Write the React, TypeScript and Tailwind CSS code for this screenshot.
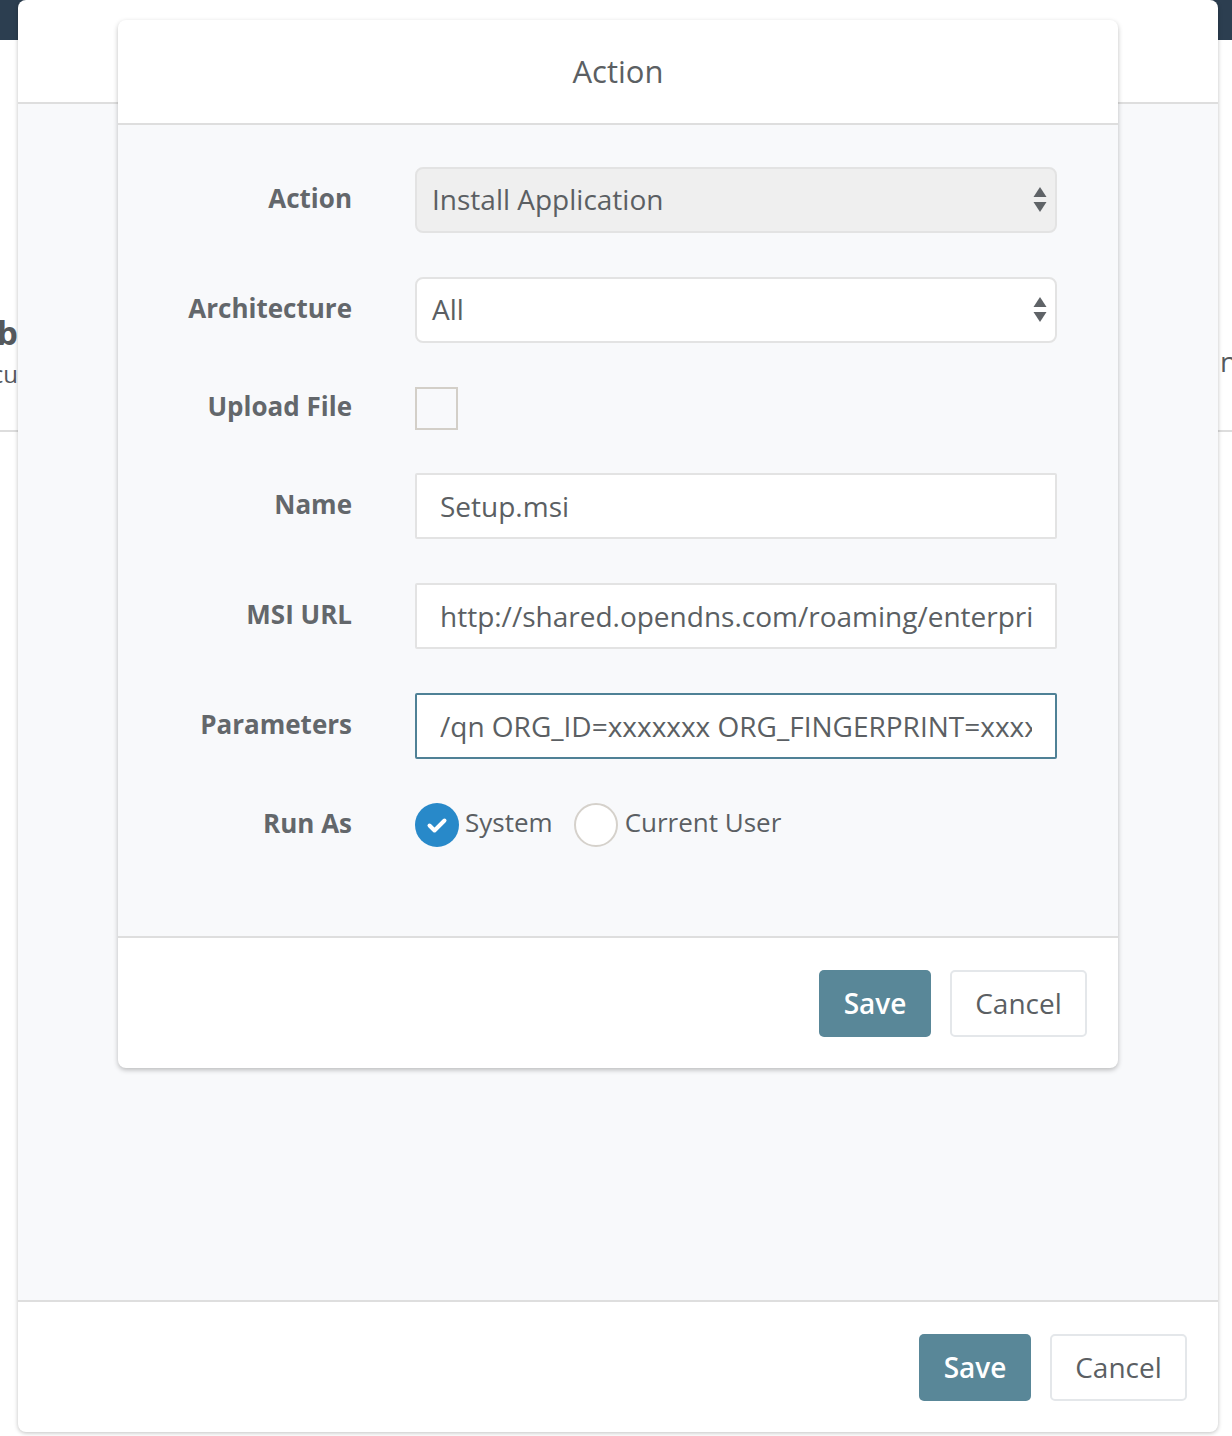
import React from "react"

const font = { fontFamily: '"Open Sans", "Noto Sans", sans-serif' }

function SelectArrows() {
  return (
    <svg width="14" height="26" viewBox="0 0 14 26" className="shrink-0">
      <path d="M7 0 L13.5 10 L0.5 10 Z" fill="#5f6367" />
      <path d="M0.5 15 L13.5 15 L7 25 Z" fill="#5f6367" />
    </svg>
  )
}

function Select({ value, disabled }: { value: string; disabled?: boolean }) {
  return (
    <div
      className={
        "flex h-[66px] w-full items-center justify-between rounded-lg border-2 border-[#e3e3e3] pl-[15px] pr-[8px] text-[28px] text-[#5b5f63] " +
        (disabled ? "bg-[#efefef]" : "bg-white")
      }
    >
      <span className="pb-[2px]">{value}</span>
      <SelectArrows />
    </div>
  )
}

function TextInput({ value, focused }: { value: string; focused?: boolean }) {
  return (
    <div
      className={
        "flex h-[66px] w-full min-w-0 items-center rounded-[2px] bg-white pl-[23px] pr-[23px] text-[28px] text-[#5b5f63] " +
        (focused ? "border-2 border-[#4f8196]" : "border-2 border-[#e3e3e3]")
      }
    >
      <div className="min-w-0 flex-1 overflow-hidden whitespace-nowrap">{value}</div>
    </div>
  )
}

function Row({ label, children, h = "h-[66px]" }: { label: string; children: React.ReactNode; h?: string }) {
  return (
    <div className={"flex items-center " + h}>
      <div className="w-[234px] shrink-0 pb-[4px] text-right text-[26px] font-bold text-[#63676b]">{label}</div>
      <div className="ml-[63px] mr-[61px] flex min-w-0 flex-1 items-center">{children}</div>
    </div>
  )
}

function Footer() {
  return (
    <div className="flex h-[130px] items-center justify-end gap-[19px] pr-[31px]">
      <button className="h-[67px] w-[112px] rounded-[5px] bg-[#598798] text-[28px] font-semibold text-white">Save</button>
      <button className="h-[67px] w-[137px] rounded-[5px] border-2 border-[#e4e7ea] bg-white text-[28px] text-[#5b5f63]">
        Cancel
      </button>
    </div>
  )
}

export default function App() {
  return (
    <div className="relative h-[1436px] w-[1232px] overflow-hidden bg-white" style={font}>
      {/* page behind the dialogs */}
      <div className="h-[40px] bg-[#2c3e50]" />
      <div className="flex h-[392px] border-b-2 border-[#dddddd]">
        <div className="flex w-[18px] shrink-0 flex-col items-end overflow-hidden pt-[270px] text-[#55595d]">
          <div className="whitespace-nowrap text-[33px] font-bold leading-[46px]">Job</div>
          <div className="whitespace-nowrap text-[24px] leading-[36px]">Execu</div>
        </div>
        <div className="flex-1" />
        <div className="w-[14px] shrink-0 overflow-hidden pl-[2px] pt-[300px] text-[28px] text-[#55595d]">
          <div className="whitespace-nowrap">name</div>
        </div>
      </div>

      {/* outer dialog */}
      <div className="absolute left-[18px] top-0 flex h-[1432px] w-[1200px] flex-col overflow-hidden rounded-lg bg-white shadow-[0_1px_4px_rgba(0,0,0,0.25)]">
        <div className="h-[104px] border-b-2 border-[#dedede]" />
        <div className="flex-1 border-b-2 border-[#dedede] bg-[#f8f9fb]" />
        <Footer />
      </div>

      {/* inner dialog */}
      <div className="absolute left-[118px] top-[20px] flex h-[1048px] w-[1000px] flex-col overflow-hidden rounded-lg bg-white shadow-[0_2px_5px_rgba(0,0,0,0.25)]">
        <div className="flex h-[105px] items-center justify-center border-b-2 border-[#dedede] text-[31px] text-[#5b5f63]">
          Action
        </div>
        <div className="flex flex-1 flex-col gap-[44px] border-b-2 border-[#dedede] bg-[#f8f9fb] pt-[42px]">
          <Row label="Action">
            <Select value="Install Application" disabled />
          </Row>
          <Row label="Architecture">
            <Select value="All" />
          </Row>
          <Row label="Upload File" h="h-[42px]">
            <div className="mt-[1px] h-[43px] w-[43px] border-2 border-[#d3cfc8]" />
          </Row>
          <Row label="Name">
            <TextInput value="Setup.msi" />
          </Row>
          <Row label="MSI URL">
            <TextInput value="http://shared.opendns.com/roaming/enterprise/release/win/production/Setup.msi" />
          </Row>
          <Row label="Parameters">
            <TextInput value="/qn ORG_ID=xxxxxxx ORG_FINGERPRINT=xxxxxxxxxxxxxxxxxxxx USER_ID=xxxxxxx" focused />
          </Row>
          <Row label="Run As" h="h-[44px]">
            <div className="flex items-center text-[26px] text-[#5b5f63]">
              <span className="flex h-[44px] w-[44px] items-center justify-center rounded-full bg-[#2889c9]">
                <svg width="28" height="28" viewBox="0 0 28 28" fill="none">
                  <path d="M6.5 14.5 L11.5 19.5 L21.5 9.5" stroke="white" strokeWidth="4" strokeLinecap="round" strokeLinejoin="round" />
                </svg>
              </span>
              <span className="ml-[6px] pb-[5px]">System</span>
              <span className="ml-[21px] h-[44px] w-[44px] rounded-full border-2 border-[#d5d1cb] bg-white" />
              <span className="ml-[7px] pb-[5px]">Current User</span>
            </div>
          </Row>
        </div>
        <Footer />
      </div>
    </div>
  )
}
